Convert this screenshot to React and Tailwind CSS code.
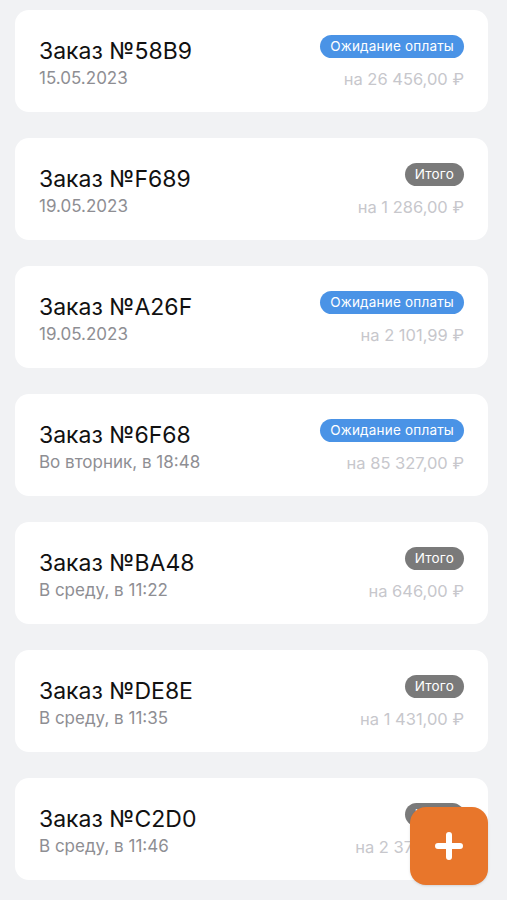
import React from 'react';

const orders = [
  { id: '58B9', date: '15.05.2023', status: 'wait', sum: '26 456,00' },
  { id: 'F689', date: '19.05.2023', status: 'total', sum: '1 286,00' },
  { id: 'A26F', date: '19.05.2023', status: 'wait', sum: '2 101,99' },
  { id: '6F68', date: 'Во вторник, в 18:48', status: 'wait', sum: '85 327,00' },
  { id: 'BA48', date: 'В среду, в 11:22', status: 'total', sum: '646,00' },
  { id: 'DE8E', date: 'В среду, в 11:35', status: 'total', sum: '1 431,00' },
  { id: 'C2D0', date: 'В среду, в 11:46', status: 'total', sum: '2 373,00' },
];

const OrderCard = ({ order }) => (
  <div className="h-[102px] bg-white rounded-[14px] px-6 flex justify-between items-center">
    <div className="flex flex-col pt-[3px]">
      <span className="text-[23px] leading-[28px] text-[#111]">Заказ №{order.id}</span>
      <span className="mt-[2px] text-[17px] leading-[22px] text-[#8e8e93]">{order.date}</span>
    </div>
    <div className="flex flex-col items-end gap-[11px] pt-[1px]">
      {order.status === 'wait' ? (
        <span className="h-[23px] px-[10px] rounded-full bg-[#4a93e6] text-white text-[13.5px] leading-[23px] tracking-[0.2px]">Ожидание оплаты</span>
      ) : (
        <span className="h-[23px] px-[10px] rounded-full bg-[#7a7a7a] text-white text-[13.5px] leading-[23px] tracking-[0.2px]">Итого</span>
      )}
      <span className="text-[16.5px] leading-[20px] text-[#c7c7cc]">на {order.sum} ₽</span>
    </div>
  </div>
);

export default function App() {
  return (
    <div className="relative w-[507px] h-[900px] overflow-hidden bg-[#f1f2f4] font-['Inter','Liberation_Sans',sans-serif]">
      <div className="flex flex-col gap-[26px] pl-[15px] pr-[19px] pt-[10px]">
        {orders.map((o) => (
          <OrderCard key={o.id} order={o} />
        ))}
      </div>
      <button className="absolute left-[410px] top-[807px] w-[78px] h-[78px] rounded-[16px] bg-[#e8762b] flex items-center justify-center shadow-sm">
        <svg width="28" height="28" viewBox="0 0 28 28">
          <path d="M14 3v22M3 14h22" stroke="white" strokeWidth="6" strokeLinecap="round" />
        </svg>
      </button>
    </div>
  );
}
